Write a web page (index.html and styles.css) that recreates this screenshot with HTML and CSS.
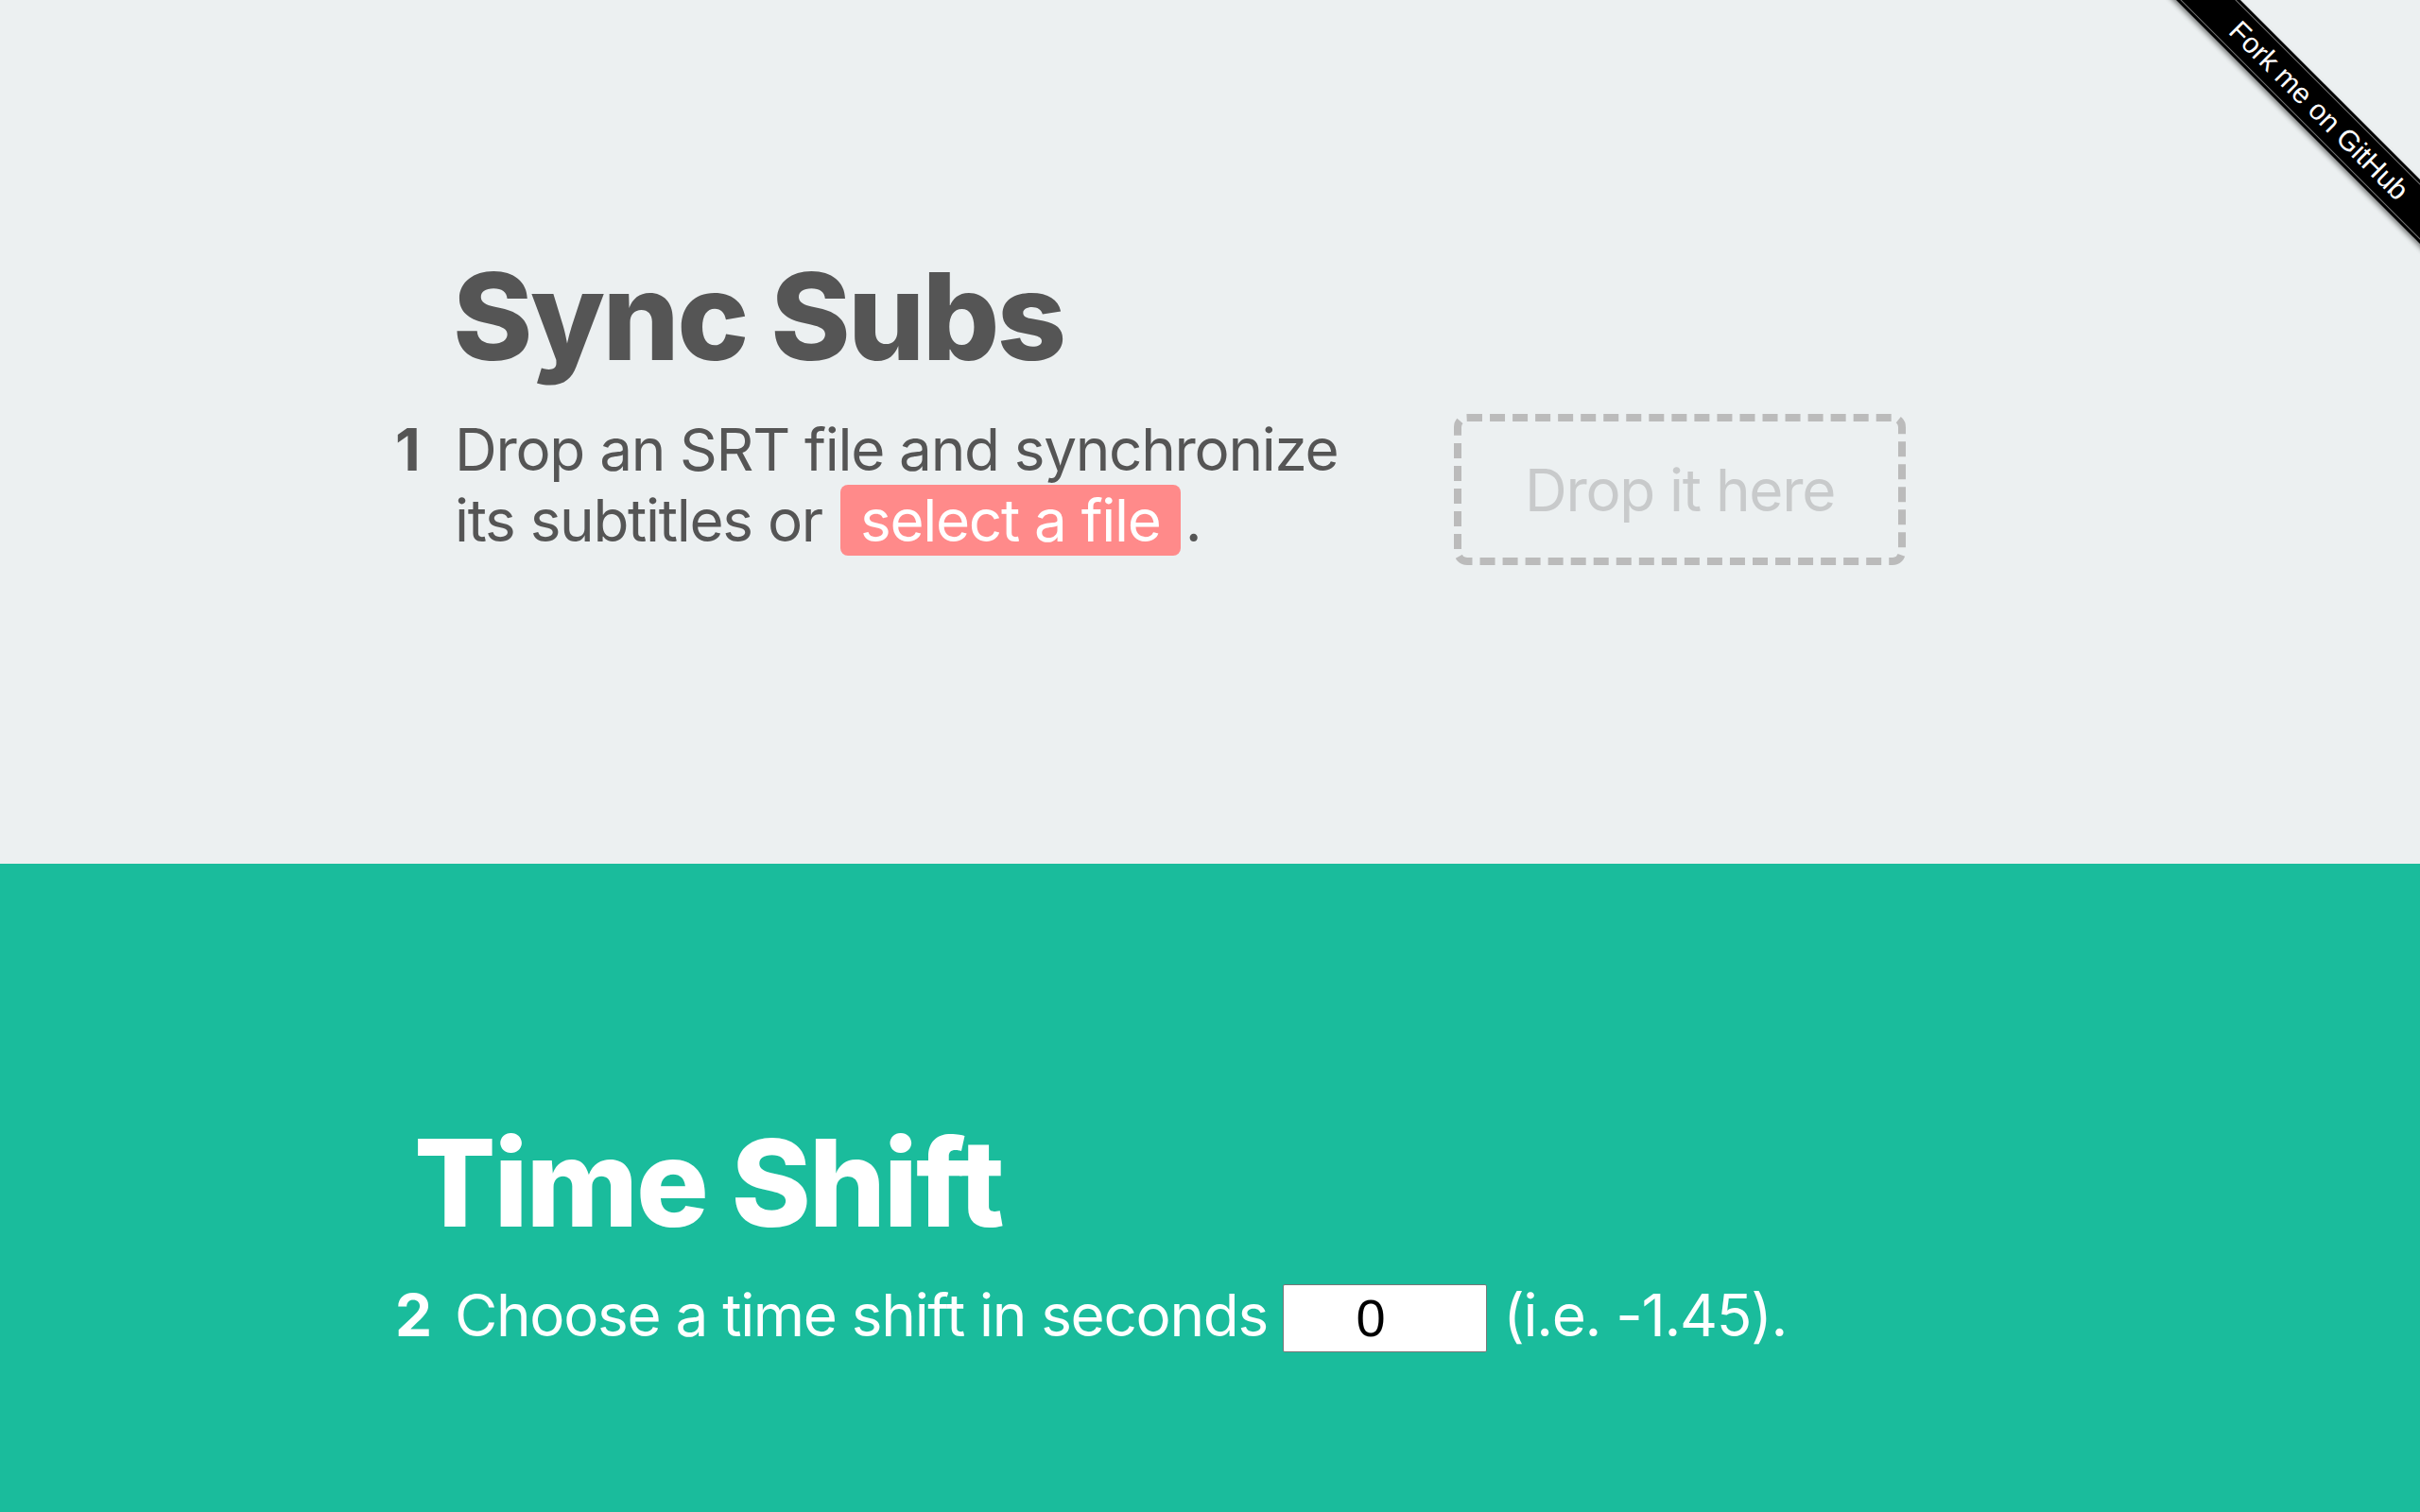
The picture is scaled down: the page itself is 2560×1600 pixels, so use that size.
FILE: index.html
```html
<!DOCTYPE html>
<html lang="en">
  <head>
    <meta charset="utf-8" />
    <meta name="viewport" content="width=device-width, initial-scale=1" />
    <title>Sync Subs</title>
    <link rel="stylesheet" href="styles.css">
  </head>
  <body>
    <section class="panel sync">
      <div class="ribbon-wrap">
        <a class="ribbon" href="#"><span>Fork me on GitHub</span></a>
      </div>
      <h1 class="title">Sync Subs</h1>
      <div class="step">
        <span class="num">1</span>
        <p class="text">Drop an SRT file and synchronize its subtitles or <label class="pick" for="file">select a file</label>.</p>
        <div class="drop">Drop it here</div>
      </div>
      <input id="file" class="hidden" type="file" accept=".srt">
    </section>
    <section class="panel shift">
      <h1 class="title">Time Shift</h1>
      <div class="step">
        <span class="num">2</span>
        <p class="text">Choose a time shift in seconds <input class="seconds" type="text" value="0"> (i.e. -1.45).</p>
      </div>
    </section>
  </body>
</html>
```
FILE: styles.css
```css
:root {
  --clouds: #ecf0f1;
  --turquoise: #1abc9c;
  --ink: #555555;
  --pink: #ff8a8a;
  --dash: #bbbbbb;
}
body {
  margin: 0;
  font-family: Inter, "Noto Sans", sans-serif;
  background: var(--turquoise);
}
.panel {
  position: relative;
  height: 914px;
  box-sizing: border-box;
  padding: 257px 0 0 418px;
  overflow: hidden;
}
.sync {
  background: var(--clouds);
  color: var(--ink);
}
.shift {
  color: #fff;
  padding-top: 260px;
}
.title {
  margin: 0 0 26px 61px;
  font-size: 128px;
  font-weight: 800;
  letter-spacing: -2.6px;
  line-height: normal;
}
.shift .title {
  margin-left: 20px;
  margin-bottom: 25px;
  letter-spacing: -2.2px;
}
.step {
  display: flex;
  align-items: flex-start;
  font-size: 62px;
  letter-spacing: -1.3px;
  line-height: normal;
}
.num {
  width: 63px;
  flex-shrink: 0;
  font-weight: 700;
}
.text {
  margin: 0;
  width: 960px;
  flex-shrink: 0;
}
.shift .text {
  width: auto;
  white-space: nowrap;
}
.pick {
  display: inline-block;
  padding: 0 21px;
  margin: 0 5px 0 3px;
  border-radius: 8px;
  background: var(--pink);
  color: #fff;
  cursor: pointer;
}
.drop {
  margin-left: 97px;
  width: 478px;
  height: 160px;
  box-sizing: border-box;
  border: 8px dashed var(--dash);
  border-radius: 14px;
  display: flex;
  align-items: center;
  justify-content: center;
  color: #c8cacb;
}
.hidden {
  display: none;
}
.seconds {
  width: 216px;
  height: 72px;
  box-sizing: border-box;
  margin: 0 1px 0 0;
  padding: 0 30px 0 0;
  border: 1px solid #777;
  border-radius: 2px;
  background: #fff;
  color: #000;
  font: 56px "Liberation Sans", Arial, sans-serif;
  letter-spacing: 0;
  text-align: center;
}
.ribbon-wrap {
  position: absolute;
  top: 0;
  right: 0;
  width: 300px;
  height: 300px;
  overflow: hidden;
}
.ribbon {
  position: absolute;
  left: -7px;
  top: 93px;
  width: 400px;
  padding: 3px 0;
  transform: rotate(45deg);
  background: #000;
  box-shadow: 0 3px 5px rgba(0, 0, 0, 0.45);
  color: #fff;
  text-decoration: none;
  text-align: center;
}
.ribbon span {
  display: block;
  border-top: 1px solid rgba(255, 255, 255, 0.45);
  border-bottom: 1px solid rgba(255, 255, 255, 0.45);
  font: 30px/40px "Liberation Sans", Arial, sans-serif;
}
```
